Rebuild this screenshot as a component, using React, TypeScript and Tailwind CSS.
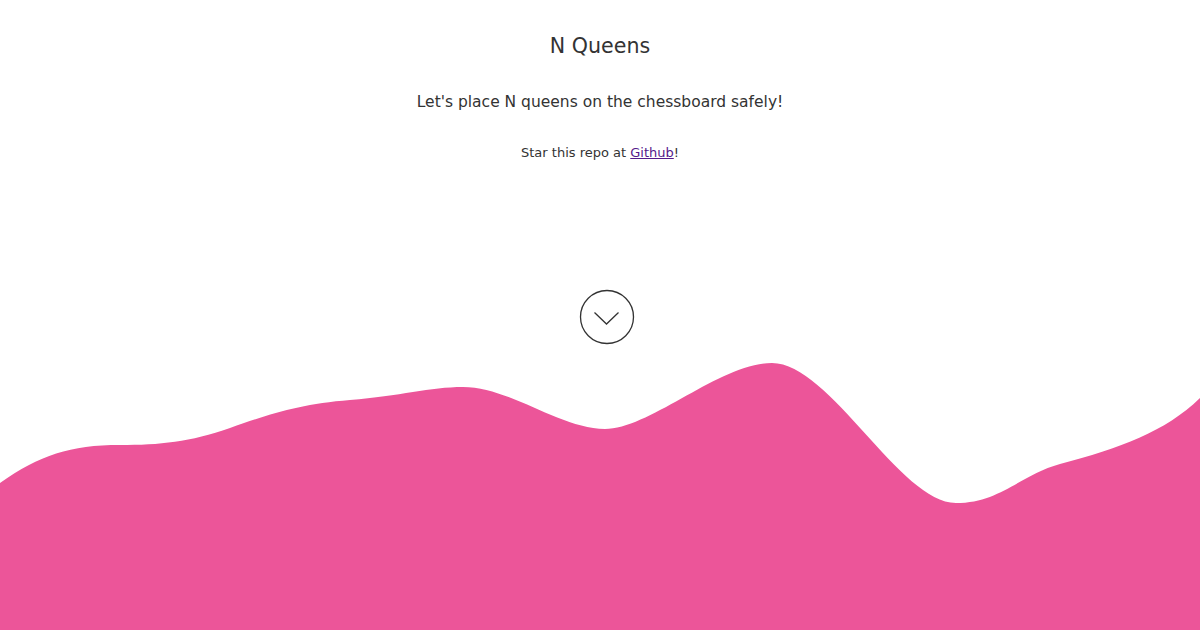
import React from "react";

export default function App() {
  return (
    <div
      className="flex h-[630px] w-[1200px] flex-col overflow-hidden bg-white text-[#333]"
      style={{ fontFamily: '"DejaVu Sans", "Noto Sans", sans-serif' }}
    >
      <div className="flex flex-col items-center">
        <h1 className="mt-[33px] text-[20.6px] leading-[26px]">N Queens</h1>
        <p className="mt-[33px] text-[15.5px] leading-[20px]">Let's place N queens on the chessboard safely!</p>
        <p className="mt-[33px] text-[13px] leading-[16px]">
          Star this repo at{" "}
          <a href="#" className="text-[#551a8b] underline">
            Github
          </a>
          !
        </p>
      </div>
      <div className="mt-[128px] flex justify-center pl-[13px]">
        <svg width="56" height="56" viewBox="0 0 56 56" fill="none">
          <circle cx="28" cy="28" r="26.5" stroke="#333" strokeWidth="1.3" />
          <path d="M15.5 23.5 L27.5 35 L39.5 23.5" stroke="#333" strokeWidth="1.3" />
        </svg>
      </div>
      <svg className="mt-auto block" width="1200" height="270" viewBox="0 0 1200 270">
        <path
          fill="#ec5599"
          d="M0,123 C40,95 70,85 120,85 C160,85 190,82 230,68 C270,54 300,44 350,40 C400,36 430,27 463,27 C510,27 560,69 605,69 C650,69 720,3 772,3 C830,3 900,143 956,143 C1000,143 1020,115 1060,104 C1120,88 1165,72 1200,38 L1200,270 L0,270 Z"
        />
      </svg>
    </div>
  );
}
